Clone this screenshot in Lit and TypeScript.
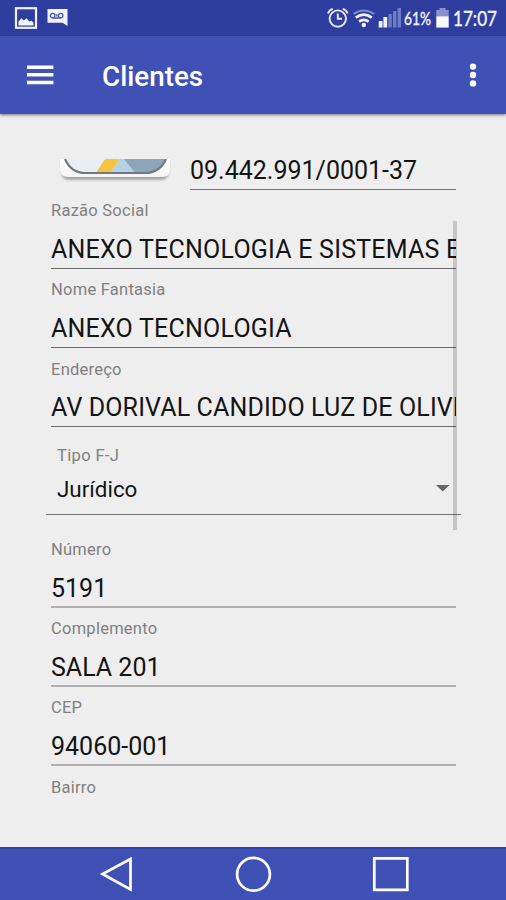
import { LitElement, html, css } from "lit";
import { customElement, property } from "lit/decorators.js";

@customElement("status-bar")
class StatusBar extends LitElement {
  static styles = css`
    :host { display: block; height: 36px; background: #2f3e9e; }
    svg { display: block; }
    text { font-family: Lato, "Open Sans", sans-serif; fill: #f2f3fc; stroke: #f2f3fc; stroke-width: 0.4px; }
  `;
  render() {
    return html`<svg width="506" height="36" viewBox="0 0 506 36">
      <rect x="16" y="8.2" width="20" height="19.6" fill="none" stroke="#f0f2ff" stroke-width="2.2" />
      <path d="M18.5 25.6v-4.200l3-3.200 2.300 2.200 2.700-2.200 3 3.400 2-1 2 2.200v2.800z" fill="#f0f2ff" />
      <path d="M47.500 9h20v17l-5-3.200h-15z" fill="#f0f2ff" />
      <g fill="none" stroke="#4c59ad" stroke-width="1.300">
        <circle cx="52.700" cy="15.600" r="2.300" /><circle cx="60.700" cy="15.600" r="2.300" />
        <path d="M52.700 18h8M56.800 14.200v2.400" />
      </g>
      <g fill="none" stroke="#e6e9fb" stroke-width="1.900">
        <circle cx="337.800" cy="18.600" r="8.200" />
        <path d="M337.800 13.500v5.200h4.200M328 13.400q1-3.500 4.800-4.600M347.600 13.400q-1-3.500-4.800-4.600" />
      </g>
      <path d="M353.600 14q10-7 20.600 0" fill="none" stroke="#7d89cb" stroke-width="2" />
      <g fill="none" stroke="#f0f2ff" stroke-width="2.600">
        <path d="M355.800 17.600q8-6 16 0M359 21.600q4.800-3.600 9.600 0" />
      </g>
      <circle cx="363.800" cy="25" r="2.200" fill="#f0f2ff" />
      <path d="M378.700 21h3.800v6.500h-3.800zM383.400 17h3.800v10.500h-3.800z" fill="#f0f2ff" />
      <path d="M388.400 14h3.400v13.500h-3.400zM393 11h3.400v16.500H393zM397.600 8h3.400v19.500h-3.400z" fill="#6f7bc5" />
      <text x="404" y="24.600" font-size="17.500" textLength="27" lengthAdjust="spacingAndGlyphs">61%</text>
      <path d="M439.500 8h6v2h3.200v7h-12.400v-7h3.200z" fill="#8791cf" />
      <path d="M436.300 16.400h12.400v11.200h-12.400z" fill="#f8f9ff" />
      <text x="453" y="26.200" font-size="22" textLength="44" lengthAdjust="spacingAndGlyphs">17:07</text>
    </svg>`;
  }
}

@customElement("app-toolbar")
class AppToolbar extends LitElement {
  static styles = css`
    :host {
      display: flex; align-items: center; box-sizing: border-box; height: 78px;
      padding: 0 27px; background: #3f51b5; color: #fff;
      box-shadow: 0 1px 3px rgba(0, 0, 0, 0.5); z-index: 1;
    }
    .title { margin: 3px auto 0 48px; font: 500 27.8px/34px Roboto, sans-serif; }
    svg { display: block; }
  `;
  render() {
    return html`
      <svg width="27" height="20" viewBox="0 0 27 20"><path d="M0 2.200h26.400M0 9.800h26.400M0 17.400h26.400" stroke="#fff" stroke-width="3.500" /></svg>
      <span class="title">Clientes</span>
      <svg width="12" height="26" viewBox="0 0 12 26" fill="#fff"><circle cx="6" cy="4.600" r="3.200" /><circle cx="6" cy="13" r="3.200" /><circle cx="6" cy="21.400" r="3.200" /></svg>
    `;
  }
}

@customElement("text-field")
class TextField extends LitElement {
  @property() label = "";
  @property() value = "";
  static styles = css`
    :host { display: block; box-sizing: border-box; height: 79.25px; padding-top: 11.2px; font-family: Roboto, sans-serif; white-space: nowrap; }
    .label { font-size: 16.5px; line-height: 20px; color: #808080; letter-spacing: 0.25px; }
    .value {
      box-sizing: border-box; height: 35px; margin-top: 12.8px; padding-top: 1px; overflow: hidden;
      font-size: 25px; line-height: 30px; color: #141414; letter-spacing: var(--tracking, 0);
      border-bottom: var(--line, 1px solid #6c6c6c);
    }
  `;
  render() {
    return html`<div class="label">${this.label}</div>
      ${this.value ? html`<div class="value">${this.value}</div>` : ""}`;
  }
}

@customElement("app-root")
class AppRoot extends LitElement {
  static styles = css`
    :host { display: flex; flex-direction: column; height: 900px; background: #eee; overflow: hidden; font-family: Roboto, sans-serif; }
    .form { position: relative; flex: 1; padding: 45px 50px 0 51px; overflow: hidden; }
    .head { display: flex; justify-content: space-between; height: 31px; }
    .logo { display: block; margin-left: 5px; }
    .cnpj { box-sizing: border-box; width: 266px; height: 31px; border-bottom: 1px solid #777; font-size: 25px; line-height: 24px; color: #141414; white-space: nowrap; }
    .company { --tracking: 0.22px; }
    .address { --tracking: 0.13px; }
    .light { --line: 2px solid #b0b0b0; }
    .spinner { box-sizing: border-box; height: 87.5px; margin: 0 -5px 13.5px; padding: 18px 11px 0; border-bottom: 1px solid #747474; }
    .type { font-size: 16.5px; line-height: 20px; color: #808080; letter-spacing: 0.35px; }
    .row { display: flex; align-items: center; justify-content: space-between; margin-top: 8px; font-size: 22.4px; line-height: 30px; color: #141414; }
    .scrollbar { position: absolute; left: 452.5px; top: 107px; width: 4.5px; height: 309px; background: rgba(0, 0, 0, 0.17); }
    .nav { display: block; background: #3f51b5; border-top: 2px solid #2f41a8; }
  `;
  render() {
    return html`
      <status-bar></status-bar>
      <app-toolbar></app-toolbar>
      <main class="form">
        <div class="head">
          <svg class="logo" width="120" height="26" viewBox="0 0 120 26">
            <defs>
              <linearGradient id="plate" x1="0" y1="0" x2="0" y2="1"><stop offset="0" stop-color="#fff" /><stop offset="1" stop-color="#f4f4f4" /></linearGradient>
              <filter id="soft"><feGaussianBlur stdDeviation="1.3" /></filter>
              <clipPath id="inner"><path d="M9 0c4 9 10 14 20 14h60C99 14 106 9 110 0z" /></clipPath>
            </defs>
            <path d="M5 0v12q0 9 9 9h90q9 0 9-9V0z" fill="#888" opacity=".7" filter="url(#soft)" />
            <path d="M4 0v10q0 8 8 8h94q8 0 8-8V0z" fill="url(#plate)" />
            <g clip-path="url(#inner)">
              <path d="M0 0h120v16H0z" fill="#e8eef3" />
              <path d="M49 0h15L54 15H39z" fill="#f6c443" />
              <path d="M64 0h5l13 15H54z" fill="#b4d2e6" />
              <path d="M68 0h46v15H80z" fill="#8ea6b9" />
            </g>
            <path d="M9 0c4 9 10 14 20 14h60C99 14 106 9 110 0" fill="none" stroke="#717980" stroke-width="2.200" />
          </svg>
          <div class="cnpj">09.442.991/0001-37</div>
        </div>
        <div class="company">
          <text-field label="Razão Social" value="ANEXO TECNOLOGIA E SISTEMAS E"></text-field>
          <text-field label="Nome Fantasia" value="ANEXO TECNOLOGIA"></text-field>
          <text-field class="address" label="Endereço" value="AV DORIVAL CANDIDO LUZ DE OLIVE"></text-field>
        </div>
        <div class="spinner">
          <div class="type">Tipo F-J</div>
          <div class="row">Jurídico
            <svg width="14" height="8" viewBox="0 0 14 8"><path d="M0 0h13.500L6.800 6.500z" fill="#666" /></svg>
          </div>
        </div>
        <div class="light">
          <text-field label="Número" value="5191"></text-field>
          <text-field label="Complemento" value="SALA 201"></text-field>
          <text-field label="CEP" value="94060-001"></text-field>
          <text-field label="Bairro"></text-field>
        </div>
        <div class="scrollbar"></div>
      </main>
      <svg class="nav" width="506" height="51" viewBox="0 0 506 51" fill="none" stroke="#fff" stroke-width="2.700">
        <path d="M130.500 10v30.500L102.500 25z" />
        <circle cx="253.500" cy="25.300" r="16.400" />
        <path d="M374.300 9.300h33v31.500h-33z" />
      </svg>
    `;
  }
}
